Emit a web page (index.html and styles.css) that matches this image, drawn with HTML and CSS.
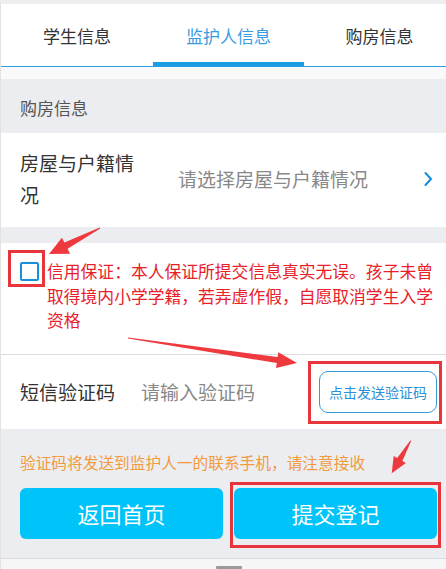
FILE: index.html
```html
<!DOCTYPE html>
<html lang="zh-CN">
<head>
<meta charset="utf-8">
<title>监护人信息</title>
<link rel="stylesheet" href="styles.css">
</head>
<body>
<div class="page">
  <nav class="tabs">
    <div class="tab tab-1">学生信息</div>
    <div class="tab tab-2 active">监护人信息</div>
    <div class="tab tab-3">购房信息</div>
  </nav>
  <div class="strip"></div>
  <div class="section-title">购房信息</div>
  <div class="house-row">
    <div class="house-label">房屋与户籍情况</div>
    <div class="house-value">请选择房屋与户籍情况</div>
    <svg class="chevron" width="10" height="16" viewBox="0 0 10 16"><polyline points="2.5,2 8,8 2.5,14" fill="none" stroke="#1a8ed8" stroke-width="2.1" stroke-linecap="round" stroke-linejoin="round"/></svg>
  </div>
  <div class="gap"></div>
  <div class="credit">
    <span class="checkbox"></span>
    <p class="credit-text">信用保证：本人保证所提交信息真实无误。孩子未曾取得境内小学学籍，若弄虚作假，自愿取消学生入学资格</p>
  </div>
  <div class="sms">
    <span class="sms-label">短信验证码</span>
    <span class="sms-input">请输入验证码</span>
    <button class="send-btn">点击发送验证码</button>
  </div>
  <div class="note">验证码将发送到监护人一的联系手机，请注意接收</div>
  <div class="actions">
    <div class="btn">返回首页</div>
    <div class="btn">提交登记</div>
  </div>
  <div class="footer"><span class="handle"></span></div>
</div>
<svg class="annot" width="446" height="569" viewBox="0 0 446 569">
  <g fill="none" stroke="#e8353b" stroke-width="3">
    <rect x="9.5" y="251.5" width="34" height="34"/>
    <rect x="309.5" y="362.5" width="131" height="60"/>
    <rect x="231.5" y="483.5" width="208" height="63"/>
  </g>
  <g fill="#ee3a3e">
    <polygon points="99.8,227.6 64.4,242.6 61.9,237.7 49,254 70.1,253.7 67.6,248.8 100.2,228.4"/>
    <polygon points="128.1,337.5 277.6,357.1 278.4,352.2 297,363 276,368 276.8,363.1 127.9,338.5"/>
    <polygon points="410.3,440.4 397.2,458 393.7,456 391.7,473.3 405.9,463 402.4,461 411.1,441"/>
  </g>
</svg>
</body>
</html>
```
FILE: styles.css
```css
* { box-sizing: border-box; }
html, body { margin: 0; padding: 0; }
body {
  width: 446px;
  height: 569px;
  overflow: hidden;
  position: relative;
  background: #fff;
  font-family: "Noto Sans CJK SC", "Microsoft YaHei", sans-serif;
  text-spacing-trim: space-all;
}
.page {
  border-left: 1px solid #e2e2e2;
  border-top: 4px solid #eeeeee;
  height: 569px;
  background: #ebedf0;
}
.tabs {
  display: flex;
  height: 63px;
  background: #fff;
  border-bottom: 1px solid #2aa0e2;
  overflow: hidden;
}
.tab {
  position: relative;
  display: flex;
  align-items: center;
  justify-content: center;
  font-size: 17px;
  color: #333;
  flex: none;
}
.tab-1 { width: 152px; }
.tab-2 { width: 151px; }
.tab-3 { width: 151px; }
.tab.active { color: #3b9be0; }
.tab.active::after {
  content: "";
  position: absolute;
  left: 0;
  right: 0;
  bottom: 0;
  height: 4px;
  background: #1b9ce2;
}
.strip { height: 12px; background: #f9f9f9; }
.section-title {
  height: 54px;
  padding: 3px 0 0 19px;
  display: flex;
  align-items: center;
  font-size: 17px;
  color: #555;
}
.house-row {
  background: #fff;
  display: flex;
  align-items: center;
  padding: 14px 0 16px 19px;
}
.house-label {
  width: 120px;
  font-size: 19px;
  line-height: 32px;
  color: #333;
}
.house-value {
  margin-left: 38px;
  font-size: 19px;
  line-height: 32px;
  color: #888;
}
.chevron { margin-left: auto; margin-right: 13px; }
.gap { height: 16px; }
.credit {
  background: #fff;
  display: flex;
  align-items: flex-start;
  padding: 16px 4px 21px 19px;
  border-bottom: 1px solid #dcdcdc;
}
.checkbox {
  flex: none;
  width: 19px;
  height: 19px;
  margin: 3px 8px 0 0;
  border: 2px solid #1b8fd9;
  border-radius: 2px;
}
.credit-text {
  margin: 0;
  font-size: 16.8px;
  line-height: 24.5px;
  color: #e8202a;
}
.sms {
  background: #fff;
  height: 74px;
  display: flex;
  align-items: center;
  padding-left: 19px;
}
.sms-label { font-size: 19px; color: #333; }
.sms-input { margin-left: 26px; font-size: 19px; color: #888; }
.send-btn {
  margin-left: auto;
  margin-right: 9px;
  width: 118px;
  height: 42px;
  border: 1px solid #3a9ad9;
  border-radius: 9px;
  background: #fff;
  font-family: inherit;
  font-size: 14px;
  color: #2d8fd5;
  padding: 0;
}
.note {
  height: 40px;
  padding: 24px 0 0 19px;
  font-size: 15.7px;
  line-height: 20px;
  color: #f39a3e;
  white-space: nowrap;
}
.actions {
  display: flex;
  gap: 11px;
  padding: 19px 9px 19px 19px;
}
.btn {
  flex: 1;
  height: 51px;
  border-radius: 6px;
  background: #00c4f9;
  color: #fff;
  font-size: 22px;
  display: flex;
  align-items: center;
  justify-content: center;
}
.footer {
  border-top: 1px solid #dadada;
  height: 12px;
  background: #f6f6f6;
  padding: 7px 0 0 215px;
}
.handle {
  display: block;
  width: 26px;
  height: 3px;
  background: #9a9a9a;
  border-radius: 1px;
}
.annot {
  position: absolute;
  left: 0;
  top: 0;
  pointer-events: none;
}
```
